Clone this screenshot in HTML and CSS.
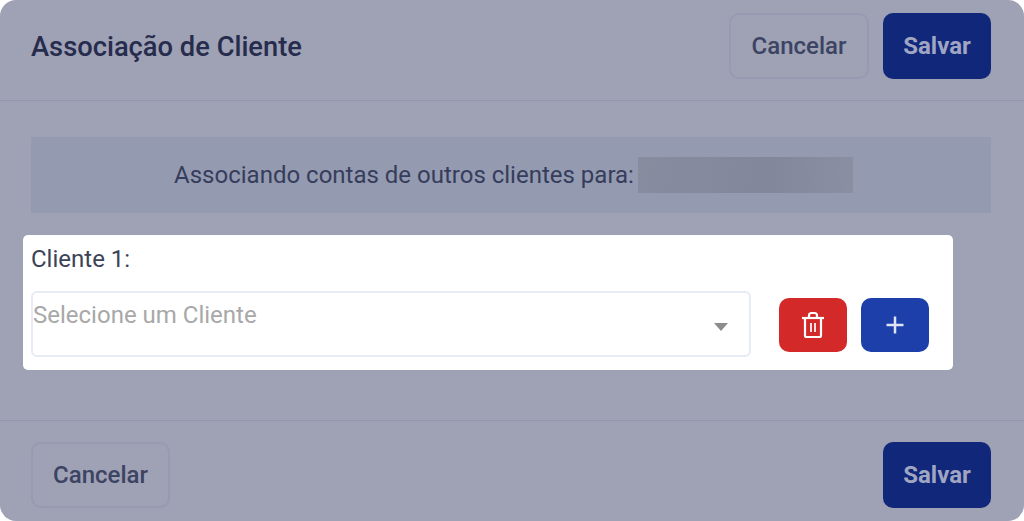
FILE: index.html

```html
<!DOCTYPE html>
<html lang="pt-BR">
<head>
  <meta charset="UTF-8" />
  <meta name="viewport" content="width=device-width, initial-scale=1.0" />
  <title>Associação de Cliente</title>
  <link rel="stylesheet" href="styles.css">
</head>
<body>
  <div class="modal">
    <header class="modal-header">
      <h1>Associação de Cliente</h1>
      <div class="actions">
        <button class="btn btn-outline btn-top">Cancelar</button>
        <button class="btn btn-primary">Salvar</button>
      </div>
    </header>

    <main class="modal-body">
      <div class="banner">
        <span>Associando contas de outros clientes para:</span>
        <span class="blurred"></span>
      </div>

      <section class="spotlight">
        <label class="field-label">Cliente 1:</label>
        <div class="row">
          <div class="select">
            <span class="placeholder">Selecione um Cliente</span>
            <span class="arrow"></span>
          </div>
          <button class="icon-btn icon-btn-red" aria-label="Remover">
            <svg width="24" height="28" viewBox="0 0 24 28" fill="none" stroke="#fff" stroke-width="2.200">
              <path d="M1 7h22" />
              <path d="M8 7V4.500A2.500 2.500 0 0 1 10.500 2h3A2.500 2.500 0 0 1 16 4.500V7" />
              <path d="M4 7v17.500A1.500 1.500 0 0 0 5.500 26h13a1.500 1.500 0 0 0 1.500-1.500V7" />
              <path d="M10 12v9M14 12v9" stroke-width="1.700" />
            </svg>
          </button>
          <button class="icon-btn icon-btn-blue" aria-label="Adicionar">
            <svg width="20" height="20" viewBox="0 0 20 20" fill="none" stroke="#dfe4f3" stroke-width="2.500">
              <path d="M10 1.500v17M1.500 10h17" />
            </svg>
          </button>
        </div>
      </section>
    </main>

    <footer class="modal-footer">
      <button class="btn btn-outline btn-bottom">Cancelar</button>
      <button class="btn btn-primary">Salvar</button>
    </footer>
  </div>
</body>
</html>
```

FILE: styles.css

```css
body {
  margin: 0;
  background: #ffffff;
  font-family: Roboto, 'Liberation Sans', sans-serif;
}
.modal {
  height: 521px;
  display: flex;
  flex-direction: column;
  background: #9fa1b4;
  border-radius: 16px;
  overflow: hidden;
}
.modal-header {
  height: 101px;
  box-sizing: border-box;
  padding: 13px 33px 0 31px;
  display: flex;
  justify-content: space-between;
  align-items: flex-start;
  border-bottom: 1px solid #9598ac;
  flex-shrink: 0;
}
h1 {
  margin: 17px 0 0;
  font-size: 27.300px;
  line-height: 34px;
  font-weight: 500;
  color: #262c4d;
}
.actions {
  display: flex;
  gap: 14px;
}
.btn {
  height: 66px;
  box-sizing: border-box;
  border-radius: 10px;
  font-family: inherit;
  font-size: 24px;
  font-weight: 500;
  padding: 0;
}
.btn-outline {
  background: transparent;
  border: 2px solid #979ab0;
  color: #3c4463;
}
.btn-top {
  width: 140px;
}
.btn-bottom {
  width: 139px;
}
.btn-primary {
  width: 108px;
  background: #10277a;
  border: none;
  color: #a0a5c2;
  font-weight: 700;
}
.modal-body {
  flex: 1;
  padding: 36px 33px 0 31px;
}
.banner {
  height: 76px;
  display: flex;
  align-items: center;
  justify-content: center;
  gap: 4px;
  padding-left: 5px;
  box-sizing: border-box;
  background: #949ab0;
  font-size: 24px;
  color: #363d5c;
}
.blurred {
  width: 215px;
  height: 36px;
  background: linear-gradient(100deg, #878c9f, #82879b 60%, #8b8fa2);
}
.spotlight {
  width: 930px;
  height: 135px;
  box-sizing: border-box;
  margin: 22px 0 0 -8px;
  padding: 9px 8px 0;
  background: #ffffff;
  border-radius: 5px;
}
.field-label {
  display: block;
  font-size: 24px;
  line-height: 30px;
  color: #3c4257;
}
.row {
  display: flex;
  align-items: center;
  margin-top: 17px;
}
.select {
  width: 720px;
  height: 66px;
  box-sizing: border-box;
  display: flex;
  justify-content: space-between;
  border: 2px solid #e6ebf5;
  border-radius: 6px;
  padding: 7px 21px 0 0;
  margin-right: 28px;
}
.placeholder {
  font-size: 24px;
  line-height: 30px;
  color: #a8a8a8;
}
.arrow {
  width: 0;
  height: 0;
  margin-top: 23px;
  border-left: 7px solid transparent;
  border-right: 7px solid transparent;
  border-top: 8px solid #8c8c8c;
}
.icon-btn {
  width: 68px;
  height: 54px;
  margin-top: 2px;
  border: none;
  border-radius: 10px;
  display: flex;
  align-items: center;
  justify-content: center;
  padding: 0;
}
.icon-btn-red {
  background: #d32929;
  margin-right: 14px;
}
.icon-btn-blue {
  background: #1c3faa;
}
.modal-footer {
  height: 101px;
  box-sizing: border-box;
  padding: 21px 33px 0 31px;
  display: flex;
  justify-content: space-between;
  align-items: flex-start;
  border-top: 1px solid #9598ac;
  flex-shrink: 0;
}
```
